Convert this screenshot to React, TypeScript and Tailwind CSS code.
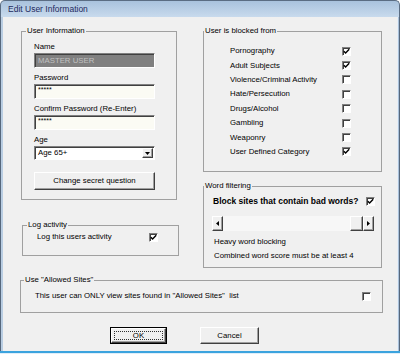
import React from "react";

const raised =
  "border border-t-white border-l-white border-b-[#404040] border-r-[#404040] shadow-[inset_-1px_-1px_0_#a0a0a0]";
const sunken =
  "border border-t-[#808080] border-l-[#808080] border-b-white border-r-white shadow-[inset_1px_1px_0_#404040]";

function Check({ on }: { on?: boolean }) {
  return (
    <div
      className={`w-[9px] h-[9px] shrink-0 bg-white ${sunken} flex items-center justify-center`}
    >
      {on && (
        <svg width="7" height="7" viewBox="0 0 7 7" className="block">
          <path d="M0.8 3.2 L2.6 5 L6.2 1.2" fill="none" stroke="#000" strokeWidth="1.4" />
        </svg>
      )}
    </div>
  );
}

function Group({
  title,
  className = "",
  legendMl = "ml-[4px]",
  children,
}: {
  title: string;
  className?: string;
  legendMl?: string;
  children: React.ReactNode;
}) {
  return (
    <fieldset className={`border border-[#a0a0a0] min-w-0 ${className}`}>
      <legend className={`${legendMl} px-[1px] leading-[10px] whitespace-pre`}>{title}</legend>
      {children}
    </fieldset>
  );
}

function Field() {
  return (
    <div
      className={`mt-[1px] w-[121px] h-[15px] bg-[#fbfbf4] ${sunken} pl-[3px] pt-[1px] text-[7px] leading-[8px]`}
    >
      *****
    </div>
  );
}

function Arrow({ dir }: { dir: "left" | "right" | "down" }) {
  if (dir === "down")
    return (
      <svg width="5" height="3" viewBox="0 0 5 3" className="block">
        <path d="M0 0H5L2.5 3Z" fill="#000" />
      </svg>
    );
  return (
    <svg width="3" height="5" viewBox="0 0 3 5" className="block">
      <path d={dir === "left" ? "M3 0V5L0 2.5Z" : "M0 0V5L3 2.5Z"} fill="#000" />
    </svg>
  );
}

const blocked: [string, boolean][] = [
  ["Pornography", true],
  ["Adult Subjects", true],
  ["Violence/Criminal Activity", false],
  ["Hate/Persecution", false],
  ["Drugs/Alcohol", false],
  ["Gambling", false],
  ["Weaponry", false],
  ["User Defined Category", true],
];

export default function App() {
  return (
    <div className="w-[400px] h-[354px] flex flex-col overflow-hidden bg-white font-['Liberation_Sans',Arial,sans-serif] text-[7.8px] leading-[10px] text-black">
      <div className="h-[17px] shrink-0 rounded-t-[5px] border border-b-0 border-[#5b6d83] bg-gradient-to-b from-[#a9c2dd] to-[#c8daed] flex items-center pl-[7px]">
        <span className="text-[8.5px] text-[#1e2a5e]">Edit User Information</span>
      </div>
      <div className="flex h-[334px] shrink-0">
        <div className="w-[3px] border-l border-[#56677c] bg-[#b9cde2]" />
        <div className="w-[394px] bg-[#f0f0f0] pt-[9px] pl-[18px] pr-[15px] flex flex-col">
          <div className="flex gap-[26px]">
            <div className="w-[156px] flex flex-col">
              <Group title="User Information">
                <div className="pt-[6px] pl-[12px] pb-[9px] flex flex-col items-start">
                  <span>Name</span>
                  <div
                    className={`mt-[1px] w-[121px] h-[15px] bg-[#808080] ${sunken} pl-[3px] flex items-center text-[#c0c0c0]`}
                  >
                    MASTER USER
                  </div>
                  <span className="mt-[5px]">Password</span>
                  <Field />
                  <span className="mt-[5px]">Confirm Password (Re-Enter)</span>
                  <Field />
                  <span className="mt-[5px]">Age</span>
                  <div
                    className={`mt-[1px] w-[121px] h-[14px] bg-white ${sunken} flex items-center justify-between pl-[3px] pr-[1px]`}
                  >
                    <span>Age 65+</span>
                    <div
                      className={`w-[11px] h-[10px] bg-[#f0f0f0] ${raised} flex items-center justify-center`}
                    >
                      <Arrow dir="down" />
                    </div>
                  </div>
                  <div
                    className={`mt-[12px] w-[121px] h-[18px] bg-[#f0f0f0] ${raised} flex items-center justify-center`}
                  >
                    Change secret question
                  </div>
                </div>
              </Group>
              <Group title="Log activity" className="mt-[20px] ml-[1px] w-[157px]">
                <div className="pt-[2px] pl-[14px] pb-[13px] flex items-center">
                  <span className="w-[112px]">Log this users activity</span>
                  <Check on />
                </div>
              </Group>
            </div>
            <div className="w-[179px] flex flex-col">
              <Group title="User is blocked from" legendMl="ml-0">
                <div className="pt-[8px] pl-[26px] pb-[12px]">
                  {blocked.map(([t, on]) => (
                    <div key={t} className="h-[14.4px] flex items-center">
                      <span className="w-[112px]">{t}</span>
                      <Check on={on} />
                    </div>
                  ))}
                </div>
              </Group>
              <Group title="Word filtering" legendMl="ml-0" className="mt-[9px]">
                <div className="pt-[4.5px] pl-[8px] pb-[6px] flex flex-col items-start">
                  <div className="flex items-center h-[11px]">
                    <span className="ml-[1px] w-[153px] font-bold text-[8.5px] leading-[11px]">
                      Block sites that contain bad words?
                    </span>
                    <Check on />
                  </div>
                  <div className="mt-[9.5px] w-[162px] h-[15px] bg-[#f7f7f7] flex justify-between">
                    <div
                      className={`w-[11px] h-[15px] bg-[#f0f0f0] ${raised} flex items-center justify-center`}
                    >
                      <Arrow dir="left" />
                    </div>
                    <div className="flex">
                      <div className={`w-[13px] h-[15px] bg-[#f0f0f0] ${raised}`} />
                      <div
                        className={`w-[11px] h-[15px] bg-[#f0f0f0] ${raised} flex items-center justify-center`}
                      >
                        <Arrow dir="right" />
                      </div>
                    </div>
                  </div>
                  <span className="mt-[5.5px] ml-[2px]">Heavy word blocking</span>
                  <span className="mt-[4.5px] ml-[2px]">Combined word score must be at least 4</span>
                </div>
              </Group>
            </div>
          </div>
          <Group title={'Use "Allowed Sites"'} legendMl="ml-[3px]" className="mt-[7px] mx-[-1px]">
            <div className="pt-[6px] pl-[14px] pb-[11px] flex items-center">
              <span className="w-[327px] whitespace-pre">
                {'This user can ONLY view sites found in "Allowed Sites"  list'}
              </span>
              <Check />
            </div>
          </Group>
          <div className="mt-[14px] flex pl-[89px] gap-[33px]">
            <div className="w-[57px] h-[17px] border border-black">
              <div
                className={`w-full h-full bg-[#f0f0f0] ${raised} flex items-center justify-center p-[2px]`}
              >
                <div className="w-full h-full border border-dotted border-[#303030] flex items-center justify-center">
                  OK
                </div>
              </div>
            </div>
            <div
              className={`w-[59px] h-[17px] bg-[#f0f0f0] ${raised} flex items-center justify-center`}
            >
              Cancel
            </div>
          </div>
        </div>
        <div className="w-[3px] flex">
          <div className="w-[1px] bg-[#e8eff7]" />
          <div className="w-[1px] bg-[#a9c1da]" />
          <div className="w-[1px] bg-[#56677c]" />
        </div>
      </div>
      <div className="h-[3px] shrink-0 flex flex-col">
        <div className="h-[2px] bg-[#3ba3de]" />
        <div className="h-[1px] bg-[#dfeef9]" />
      </div>
    </div>
  );
}
